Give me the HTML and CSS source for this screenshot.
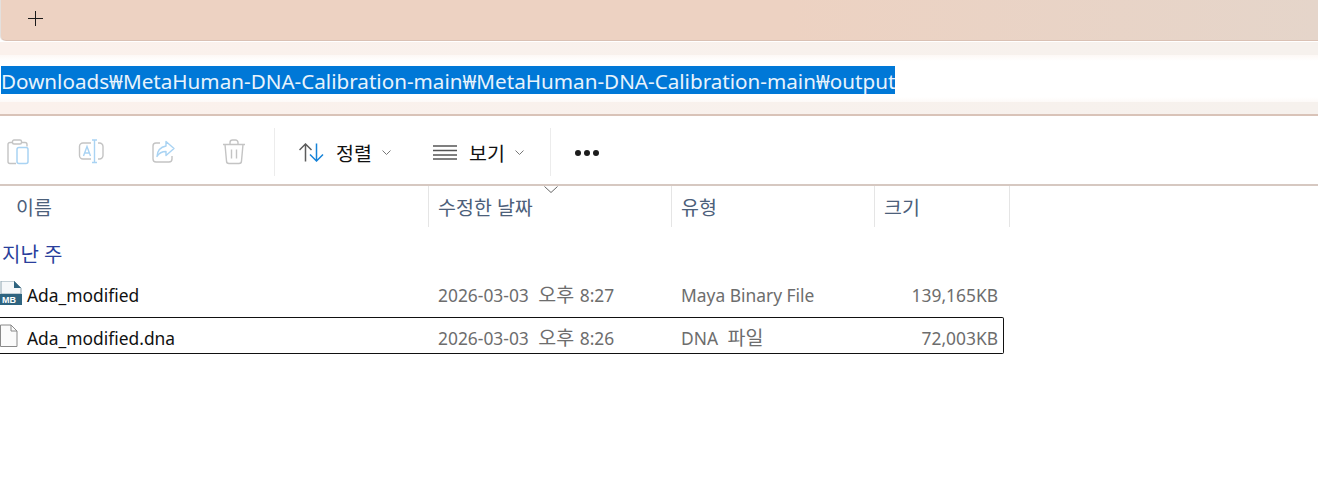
FILE: index.html
```html
<!DOCTYPE html>
<html lang="ko">
<head>
    <meta charset="UTF-8">
    <meta name="viewport" content="width=device-width, initial-scale=1.0">
    <title>output</title>
    <link rel="stylesheet" href="styles.css">
</head>
<body>
    <div class="tabbar">
        <svg class="tab-plus" width="17" height="16" viewBox="0 0 17 16"><path d="M8.500 0v15M1 7.500h15" stroke="#1a1a1a" stroke-width="1" fill="none"/></svg>
    </div>
    <div class="address">
        <div class="address-box">
            <span class="path">Downloads₩MetaHuman-DNA-Calibration-main₩MetaHuman-DNA-Calibration-main₩output</span>
        </div>
    </div>

    <div class="toolbar">
        <div class="tool-group">
            <button class="tool-btn">
                <svg width="24" height="26" viewBox="0 0 24 26" fill="none"><path d="M6 3.500H3a2 2 0 0 0-2 2v17a2 2 0 0 0 2 2h6M15 3.500h3a2 2 0 0 1 2 2v2" stroke="#c4c4c4" stroke-width="1.400"/><rect x="5.500" y="1" width="9" height="4" rx="1.500" stroke="#c4c4c4" stroke-width="1.400"/><rect x="10" y="8.500" width="11" height="16" rx="2" stroke="#a9d3f3" stroke-width="1.500"/></svg>
            </button>
            <button class="tool-btn">
                <svg width="26" height="26" viewBox="0 0 26 26" fill="none"><path d="M13 4H5a3.500 3.500 0 0 0-3.500 3.500v9A3.500 3.500 0 0 0 5 20h8M20 4h1.500A3.500 3.500 0 0 1 25 7.500v9a3.500 3.500 0 0 1-3.500 3.500H20" stroke="#c4c4c4" stroke-width="1.400"/><path d="M14 1h5M14 23.500h5M16.500 1v22.500M5.500 17l3.500-9.500 3.500 9.500M6.700 14h4.600" stroke="#a9d3f3" stroke-width="1.400"/></svg>
            </button>
            <button class="tool-btn">
                <svg width="24" height="26" viewBox="0 0 24 26" fill="none"><path d="M9 4H5a3 3 0 0 0-3 3v13a3 3 0 0 0 3 3h13a3 3 0 0 0 3-3v-3" stroke="#c4c4c4" stroke-width="1.400"/><path d="M15 2.500l8 7-8 7v-4c-4 0-7 1.500-9 5 .3-5.500 3.500-9.500 9-10.500z" stroke="#a9d3f3" stroke-width="1.400" stroke-linejoin="round"/></svg>
            </button>
            <button class="tool-btn">
                <svg width="24" height="26" viewBox="0 0 24 26" fill="none"><path d="M1 5.500h22M8 5.500V3.500a2.500 2.500 0 0 1 2.500-2.500h3A2.500 2.500 0 0 1 16 3.500v2M3 5.500l1.500 16.500a2.500 2.500 0 0 0 2.500 2.500h10a2.500 2.500 0 0 0 2.500-2.500L21 5.500M9.500 10.500v9M14.500 10.500v9" stroke="#c4c4c4" stroke-width="1.400"/></svg>
            </button>
        </div>
        <div class="tool-sep"></div>
        <button class="menu-btn menu-sort">
            <svg width="25" height="19" viewBox="0 0 25 19" fill="none"><path d="M6.500 18.500V1M.5 7l6-6 6 6" stroke="#5c5c5c" stroke-width="1.500"/><path d="M17.500 .5V18M11 11.500l6.500 6.500 6.500-6.500" stroke="#1683d8" stroke-width="1.500"/></svg>
            <span class="menu-label">정렬</span>
            <svg class="caret" width="9" height="5" viewBox="0 0 9 5" fill="none"><path d="M.5.500l4 4 4-4" stroke="#777" stroke-width="1"/></svg>
        </button>
        <button class="menu-btn menu-view">
            <svg width="24" height="15" viewBox="0 0 24 15" fill="none"><path d="M0 1h24M0 5.500h24M0 10h24M0 14h24" stroke="#555" stroke-width="1.400"/></svg>
            <span class="menu-label">보기</span>
            <svg class="caret" width="9" height="5" viewBox="0 0 9 5" fill="none"><path d="M.5.500l4 4 4-4" stroke="#777" stroke-width="1"/></svg>
        </button>
        <div class="tool-sep"></div>
        <button class="more-btn"><i></i><i></i><i></i></button>
    </div>

    <div class="file-list">
        <div class="list-head">
            <div class="col-title col-name">이름</div>
            <div class="col-title col-date">
                수정한 날짜
                <svg class="sort-mark" width="14" height="7" viewBox="0 0 14 7" fill="none"><path d="M.5.500l6.500 6 6.500-6" stroke="#666" stroke-width="1"/></svg>
            </div>
            <div class="col-title col-type">유형</div>
            <div class="col-title col-size">크기</div>
        </div>

        <div class="group-title">지난 주</div>

        <div class="file-row">
            <div class="cell-name">
                <svg class="file-icon" width="22" height="24" viewBox="0 0 22 24" fill="none"><path d="M1 0h13l7 7v6H1z" fill="#f6f8fa" stroke="#8fa5b1"/><path d="M14 0v7h7z" fill="#2f6480"/><rect x="0" y="13" width="22" height="11" fill="#2f6480"/><text x="2" y="22" class="icon-text">MB</text></svg>
                <span class="file-name">Ada_modified</span>
            </div>
            <div class="cell">2026-03-03 <span class="ko">오후</span> 8:27</div>
            <div class="cell">Maya Binary File</div>
            <div class="cell cell-size">139,165KB</div>
        </div>
        <div class="file-row file-row-current">
            <div class="cell-name">
                <svg class="file-icon" width="22" height="24" viewBox="0 0 22 24" fill="none"><path d="M.500 1H11l6 6v15.500H.500z" fill="#fbfbfb" stroke="#8a8a8a"/><path d="M11 1v6h6" stroke="#8a8a8a"/></svg>
                <span class="file-name">Ada_modified.dna</span>
            </div>
            <div class="cell">2026-03-03 <span class="ko">오후</span> 8:26</div>
            <div class="cell">DNA <span class="ko">파일</span></div>
            <div class="cell cell-size">72,003KB</div>
        </div>
    </div>
</body>
</html>
```

FILE: styles.css
```css
body {
    font-family: "Noto Sans", "Noto Sans CJK KR", sans-serif;
    background: white;
    color: #111;
    margin: 0;
    padding: 0;
    overflow: hidden;
}
button {
    background: none;
    border: none;
    padding: 0;
    font: inherit;
    color: inherit;
}
.ko {
    font-size: 19.5px;
    margin: 0 1px 0 5px;
}
.tabbar {
    height: 41px;
    box-sizing: border-box;
    padding: 11px 0 0 26px;
    margin-left: 1px;
    background: linear-gradient(to right, #edd2c2, #edd2c2 60%, #e5d5ca);
    border-bottom: 1px solid #dac1b4;
    border-bottom-left-radius: 5px;
    box-shadow: -1px 0 0 #e4e0dd;
}
.tab-plus {
    display: block;
}
.address {
    margin-top: 1px;
    height: 74px;
    box-sizing: border-box;
    padding: 13px 0 12px;
    background: linear-gradient(to right, #fbf1ec, #f6f1ed);
    border-bottom: 2px solid #d9c3b8;
}
.address-box {
    height: 47px;
    background: linear-gradient(#fdf8f5, white 6px, white 42px, #fdf9f7);
    box-sizing: border-box;
    padding-top: 11px;
    font-size: 20.65px;
    line-height: 30px;
}
.path {
    display: block;
    width: fit-content;
    height: 28px;
    margin-left: 1px;
    background: #0078d7;
    color: #e8f3fc;
    white-space: nowrap;
    overflow: hidden;
}
.toolbar {
    height: 64px;
    padding-top: 4px;
    display: flex;
    align-items: center;
    border-bottom: 2px solid #d6c8c1;
}
.tool-group {
    display: flex;
    align-items: center;
    gap: 47px;
    padding-left: 7px;
    width: 274px;
    box-sizing: border-box;
}
.tool-btn {
    display: flex;
}
.tool-sep {
    width: 1px;
    height: 48px;
    background: #ececec;
}
.menu-btn {
    display: flex;
    align-items: center;
    font-size: 19.5px;
}
.menu-sort {
    margin-left: 24px;
    width: 134px;
}
.menu-view {
    width: 117px;
}
.menu-label {
    margin-left: 12px;
}
.caret {
    margin-left: 10px;
}
.more-btn {
    display: flex;
    gap: 3px;
    margin: 2px 0 0 24px;
}
.more-btn i {
    width: 6px;
    height: 6px;
    border-radius: 50%;
    background: #1c1c1c;
}
.list-head {
    display: grid;
    grid-template-columns: 429px 243px 203px 135px;
    grid-template-rows: 41px;
    width: 1010px;
    height: 41px;
}
.col-title {
    position: relative;
    font-size: 19.5px;
    line-height: 44px;
    height: 41px;
    color: #4c607a;
    padding-left: 9px;
    border-right: 1px solid #e5e5e5;
}
.col-name {
    padding-left: 16px;
}
.sort-mark {
    position: absolute;
    top: 0;
    left: 115px;
}
.group-title {
    font-size: 20px;
    line-height: 24px;
    color: #2a3f9c;
    padding: 16px 0 0 2px;
    height: 34px;
    box-sizing: border-box;
}
.file-row {
    display: grid;
    grid-template-columns: 429px 243px 203px 129px;
    width: 1004px;
    height: 37px;
    box-sizing: border-box;
    align-items: center;
    font-size: 17.4px;
    line-height: 24px;
    color: #6d6d6d;
}
.group-title + .file-row {
    margin: 13px 0 6px;
}
.file-row-current {
    border: 1px solid #111;
    border-left: none;
    border-radius: 0 2px 2px 0;
}
.cell-name {
    display: flex;
    align-items: center;
    gap: 5px;
    color: #111;
}
.file-icon {
    flex-shrink: 0;
}
.file-name {
    padding-top: 5px;
}
.icon-text {
    font-family: "Liberation Sans", sans-serif;
    font-size: 9px;
    font-weight: bold;
    fill: white;
}
.cell {
    padding: 5px 0 0 9px;
    white-space: nowrap;
}
.cell-size {
    text-align: right;
    padding-right: 6px;
}
```
